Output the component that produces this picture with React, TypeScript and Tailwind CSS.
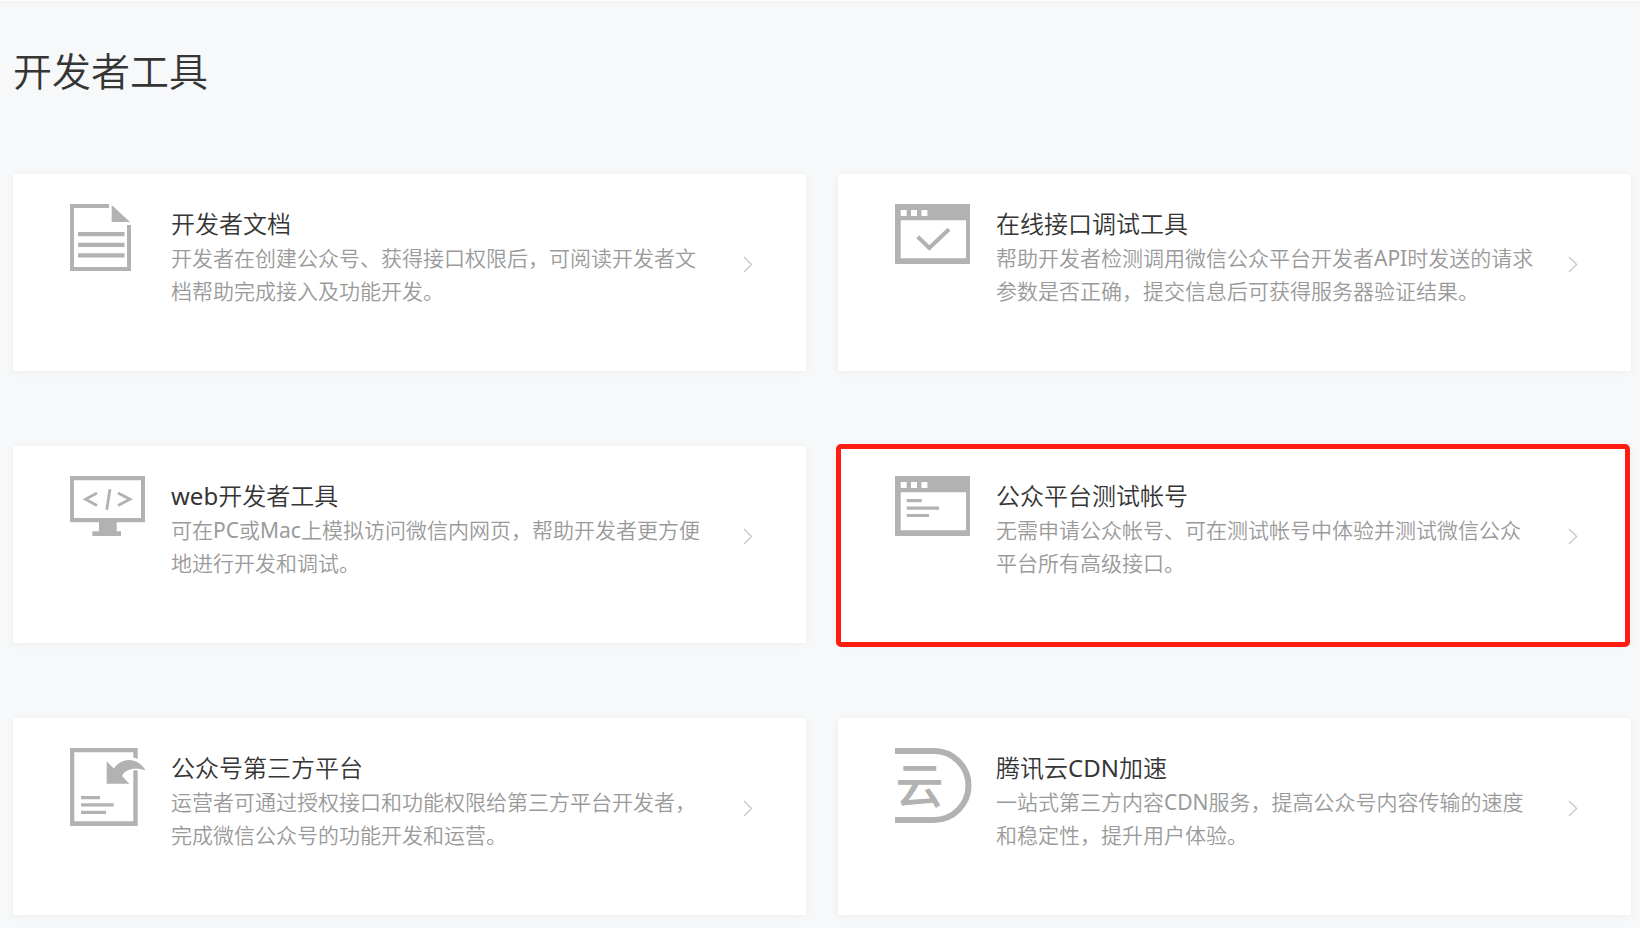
import React from "react";

interface Tool {
  title: string;
  desc: string;
  icon: React.ReactNode;
  highlighted?: boolean;
}

const DocIcon = () => (
  <svg width="61" height="67" viewBox="0 0 61 67" fill="#b2b2b2" aria-hidden="true">
    <path d="M0 0H39V4H4V63H57V21H61V67H0Z" />
    <path d="M41.7 1V18H60Z" />
    <path d="M8 28H54.5V32.3H8ZM8 38.7H54.5V43H8ZM8 49.3H54.5V53.6H8Z" />
  </svg>
);

// Browser window frame shared by two of the icons
const WindowIcon = ({ children }: { children: React.ReactNode }) => (
  <svg width="75" height="60" viewBox="0 0 75 60" fill="#b2b2b2" aria-hidden="true">
    <path
      fillRule="evenodd"
      d="M0 0H75V60H0ZM5.7 16.3V54.3H71V16.3ZM5.7 6V11.9H11.7V6ZM16 6V11.9H22V6ZM26.4 6V11.9H32.4V6Z"
    />
    {children}
  </svg>
);

const MonitorIcon = () => (
  <svg width="75" height="60" viewBox="0 0 75 60" fill="#b2b2b2" aria-hidden="true">
    <path fillRule="evenodd" d="M0 0H75V46.3H0ZM4 4.3V42H71V4.3Z" />
    <path d="M29 46H46.7V55.3H51V60H22.3V55.3H29Z" />
    <path
      d="M27 17L15.5 23.2L27 29.5M40 13.3L36.7 33.7M48 17L60 23.2L48 29.5"
      fill="none"
      stroke="#b2b2b2"
      strokeWidth="2.8"
    />
  </svg>
);

const PlatformIcon = () => (
  <svg width="76" height="78" viewBox="0 0 76 78" fill="#b2b2b2" aria-hidden="true">
    <path d="M0 0H67.7V11.2Q65.5 10 63.3 9.6V4.3H4.3V73.3H63.3V22.5Q65.5 22 67.7 22.4V78H0Z" />
    <path d="M36.7 13.2L43.8 20.4C52 9 67.5 8.5 75.7 22.6C66 19 55.5 20.5 52 28L59.3 35.7H36.7Z" />
    <path d="M11 48H30V51.2H11ZM11 55.3H43.7V58.5H11ZM11 62.7H36V65.9H11Z" />
  </svg>
);

const CloudIcon = () => (
  <svg width="77" height="75" viewBox="0 0 77 75" aria-hidden="true">
    <path d="M0 3H39A34.5 34.5 0 0 1 39 72H0" fill="none" stroke="#b2b2b2" strokeWidth="6" />
    <text
      x="24.5"
      y="55"
      textAnchor="middle"
      fill="#b2b2b2"
      className="font-['Noto_Sans_CJK_SC',sans-serif] text-[48px] font-medium"
    >
      云
    </text>
  </svg>
);

const tools: Tool[] = [
  {
    title: "开发者文档",
    desc: "开发者在创建公众号、获得接口权限后，可阅读开发者文档帮助完成接入及功能开发。",
    icon: <DocIcon />,
  },
  {
    title: "在线接口调试工具",
    desc: "帮助开发者检测调用微信公众平台开发者API时发送的请求参数是否正确，提交信息后可获得服务器验证结果。",
    icon: (
      <WindowIcon>
        <path d="M22.7 32.7L34.3 44L54 25.2" fill="none" stroke="#b2b2b2" strokeWidth="4" />
      </WindowIcon>
    ),
  },
  {
    title: "web开发者工具",
    desc: "可在PC或Mac上模拟访问微信内网页，帮助开发者更方便地进行开发和调试。",
    icon: <MonitorIcon />,
  },
  {
    title: "公众平台测试帐号",
    desc: "无需申请公众帐号、可在测试帐号中体验并测试微信公众平台所有高级接口。",
    icon: (
      <WindowIcon>
        <path d="M11.7 23.1H26.7V26.3H11.7ZM11.7 30.6H44V33.8H11.7ZM11.7 37.9H34V41.1H11.7Z" />
      </WindowIcon>
    ),
    highlighted: true,
  },
  {
    title: "公众号第三方平台",
    desc: "运营者可通过授权接口和功能权限给第三方平台开发者，完成微信公众号的功能开发和运营。",
    icon: <PlatformIcon />,
  },
  {
    title: "腾讯云CDN加速",
    desc: "一站式第三方内容CDN服务，提高公众号内容传输的速度和稳定性，提升用户体验。",
    icon: <CloudIcon />,
  },
];

const ToolCard: React.FC<{ tool: Tool }> = ({ tool }) => (
  <a
    href="#"
    className="relative flex rounded-xs bg-white pt-[30px] pr-[53px] pb-[46px] pl-[57px] shadow-[0_1px_10px_rgba(0,0,0,0.05)]"
  >
    <div className="w-[101px] shrink-0">{tool.icon}</div>
    <div className="min-h-[121px] min-w-0 flex-1">
      <h2 className="pt-0.5 text-2xl leading-9 text-[#353535]">{tool.title}</h2>
      <p className="text-[21px] leading-[33px] text-[#9a9a9a]">{tool.desc}</p>
    </div>
    <svg
      width="10"
      height="17"
      viewBox="0 0 10 17"
      className="ml-[31px] shrink-0 self-center"
      fill="none"
      stroke="#c7c7c7"
      strokeWidth="1.3"
      aria-hidden="true"
    >
      <path d="M1 1L8.6 8.5L1 16" />
    </svg>
    {tool.highlighted && (
      <span className="pointer-events-none absolute -top-0.5 right-px -bottom-1 -left-0.5 rounded-[5px] border-5 border-[#ff1d12]" />
    )}
  </a>
);

const App: React.FC = () => {
  return (
    <main className="min-h-screen border-t border-white bg-[#f6f8f9] pr-[9px] pb-[13px] pl-[13px] font-['Noto_Sans','Noto_Sans_CJK_SC_DemiLight','Noto_Sans_CJK_SC',sans-serif] font-normal shadow-[inset_0_8px_8px_-8px_rgba(0,0,0,0.05)]">
      <h1 className="pt-10 pb-[73px] text-[39px] leading-[60px] text-[#353535]">开发者工具</h1>
      <div className="grid grid-cols-2 gap-x-8 gap-y-[75px]">
        {tools.map((tool) => (
          <ToolCard key={tool.title} tool={tool} />
        ))}
      </div>
    </main>
  );
};

export default App;
